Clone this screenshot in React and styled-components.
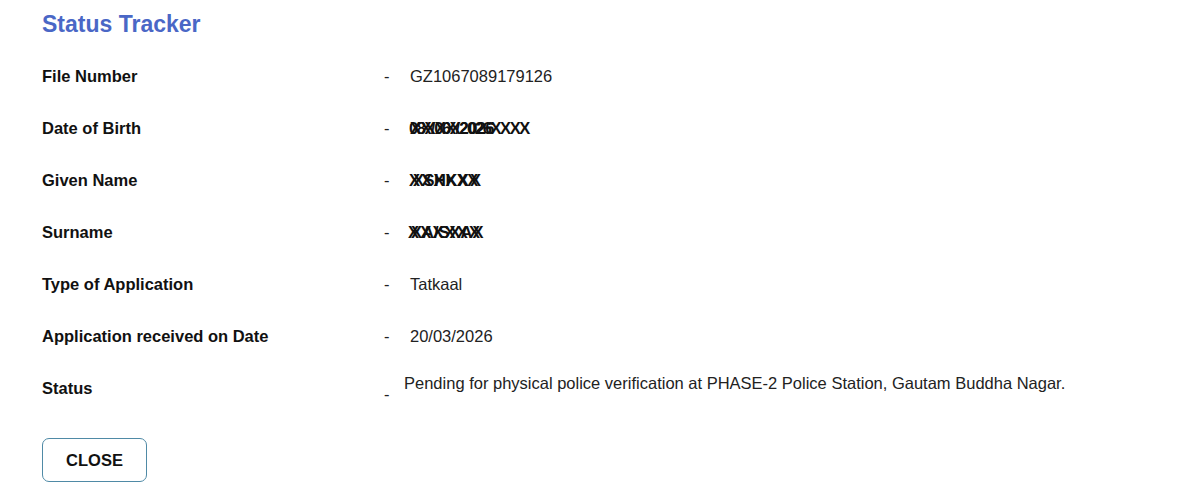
import React from 'react'
import styled, { createGlobalStyle } from 'styled-components'

const Global = createGlobalStyle`
  body {
    margin: 0;
    background: #ffffff;
    font-family: 'Liberation Sans', Arial, sans-serif;
  }
`

let Page = styled.div`
  padding: 9px 42px 0 42px;
  width: 1200px;
  height: 482px;
  box-sizing: border-box;
  overflow: hidden;
`
let Title = styled.h2`
  margin: 0 0 11px 0;
  font-size: 23px;
  line-height: 30px;
  font-weight: 700;
  color: #4a67c6;
`
let Row = styled.div`
  display: grid;
  grid-template-columns: 342px 26px 1fr;
  height: 52px;
  align-items: center;
`
let Label = styled.div`
  font-size: 16.5px;
  font-weight: 700;
  color: #111;
`
let Dash = styled.div`
  font-size: 16.5px;
  color: #222;
  transform: translateY(${p => p.$drop || 0}px);
`
let Value = styled.div`
  font-size: 16.5px;
  color: #222;
  margin-left: ${p => p.$shift || 0}px;
  transform: translateY(${p => p.$lift ? -p.$lift : 0}px);
`
let Masked = styled.span`
  position: relative;
  display: inline-block;
  font-weight: 700;
  color: #111;
  letter-spacing: ${p => p.$spacing || 0}px;
`
let Overlay = styled.span`
  position: absolute;
  left: ${p => p.$left || 0}px;
  top: 0;
  font-weight: 700;
  letter-spacing: ${p => p.$spacing || 0}px;
`
let CloseButton = styled.button`
  margin-top: 24px;
  width: 105px;
  height: 44px;
  background: #fff;
  border: 1px solid #4f8aa6;
  border-radius: 7px;
  font-family: 'Liberation Sans', Arial, sans-serif;
  font-size: 16.5px;
  font-weight: 700;
  color: #111;
  cursor: pointer;
`

function App() {
  return (
    <>
      <Global />
      <Page>
        <Title>Status Tracker</Title>
        <Row>
          <Label>File Number</Label>
          <Dash>-</Dash>
          <Value>GZ1067089179126</Value>
        </Row>
        <Row>
          <Label>Date of Birth</Label>
          <Dash>-</Dash>
          <Value $shift={-1}>
            <Masked $spacing={-1.4}>
              08X06X2026XXXX
              <Overlay $left={1} $spacing={-0.6}>XX/XX/2026</Overlay>
            </Masked>
          </Value>
        </Row>
        <Row>
          <Label>Given Name</Label>
          <Dash>-</Dash>
          <Value $shift={-1}>
            <Masked $spacing={1.2}>
              XXXXXX
              <Overlay $left={4} $spacing={-0.5}>XSHKXX</Overlay>
            </Masked>
          </Value>
        </Row>
        <Row>
          <Label>Surname</Label>
          <Dash>-</Dash>
          <Value $shift={-2}>
            <Masked $spacing={1.2}>
              XXXXXX
              <Overlay $left={3} $spacing={0}>XA/SXAX</Overlay>
            </Masked>
          </Value>
        </Row>
        <Row>
          <Label>Type of Application</Label>
          <Dash>-</Dash>
          <Value>Tatkaal</Value>
        </Row>
        <Row>
          <Label>Application received on Date</Label>
          <Dash>-</Dash>
          <Value>20/03/2026</Value>
        </Row>
        <Row>
          <Label>Status</Label>
          <Dash $drop={6}>-</Dash>
          <Value $shift={-6} $lift={5}>
            Pending for physical police verification at PHASE-2 Police Station, Gautam Buddha Nagar.
          </Value>
        </Row>
        <CloseButton>CLOSE</CloseButton>
      </Page>
    </>
  )
}

export default App
